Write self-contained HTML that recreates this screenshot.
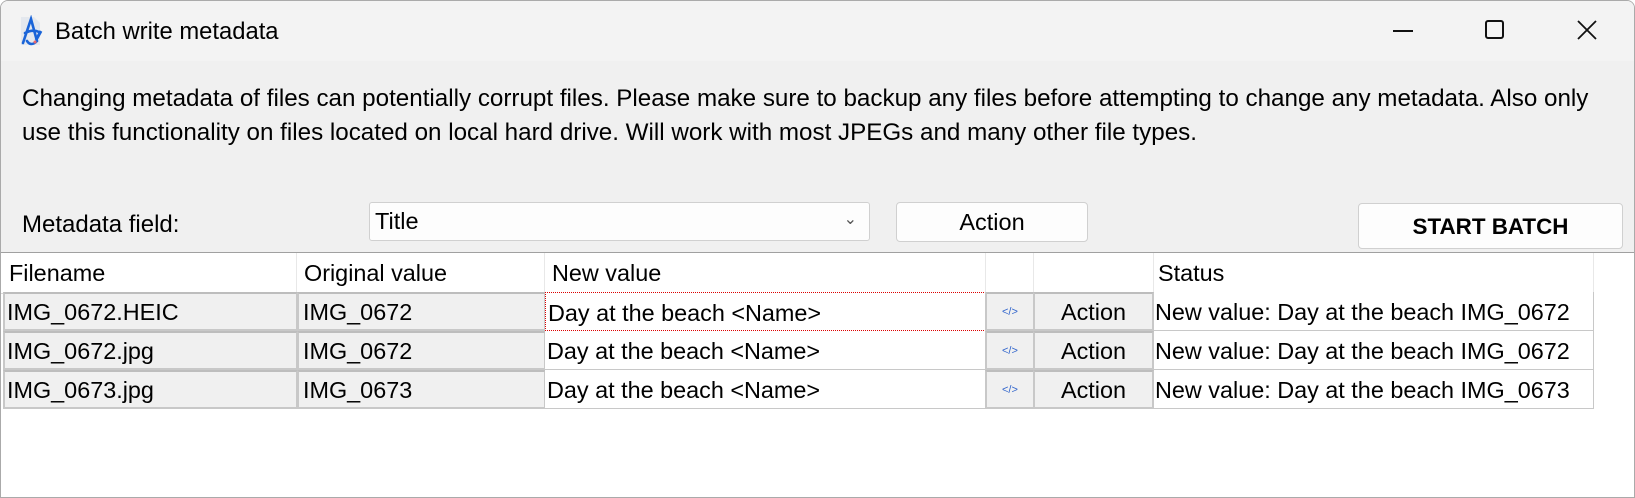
<!DOCTYPE html>
<html><head><meta charset="utf-8"><style>
*{box-sizing:border-box;margin:0;padding:0}
body{width:1635px;height:498px;overflow:hidden;background:#fff;font-family:"Liberation Sans",sans-serif;color:#000;position:relative}
.win{position:absolute;left:0;top:0;width:1635px;height:498px;background:#f0f0f0;border:1px solid #aaa;border-radius:8px 8px 0 0;overflow:hidden}
.tb{position:absolute;left:0;top:0;width:100%;height:60px;background:#f3f3f3}
.t{position:absolute;font-size:24px;white-space:nowrap}
.btn{position:absolute;background:#fdfdfd;border:1px solid #d0d0d0;border-radius:4px;font-size:23.5px;text-align:center}
.grid{position:absolute;left:0;top:251px;width:1633px;height:247px;background:#fff;border-top:1px solid #a0a0a0}
.c{position:absolute;font-size:23.4px;white-space:nowrap;overflow:hidden;padding-left:4px;line-height:37px}
.g{background:#f0f0f0;border:2px solid #c8c8c8;border-top-color:#bdbdbd}
.w{background:#fff;border-bottom:1px solid #c8c8c8;padding-top:2px}
</style></head><body>
<div class="win">
<div class="tb"></div>
<svg style="position:absolute;left:14px;top:14px" width="32" height="32" viewBox="0 0 32 32">
<path d="M6 2h13l6 6v22H6z" fill="#e4e8ee"/>
<path d="M8 28 L16 4 L22 26 M10 18 Q18 14 24 17 M22 26 Q16 32 12 26" fill="none" stroke="#1a64d8" stroke-width="2.6" stroke-linecap="round"/>
<path d="M26 16 l-5 9" stroke="#1a64d8" stroke-width="3"/><circle cx="20" cy="27" r="1.5" fill="#e66"/>
</svg>
<div class="t" style="left:54px;top:17px;font-size:23.8px">Batch write metadata</div>
<div style="position:absolute;left:1392px;top:29px;width:20px;height:2px;background:#111"></div>
<div style="position:absolute;left:1484px;top:19px;width:19px;height:19px;border:2px solid #111;border-radius:3px"></div>
<svg style="position:absolute;left:1576px;top:19px" width="20" height="20"><path d="M1 1L19 19M19 1L1 19" stroke="#111" stroke-width="1.8"/></svg>
<div class="t" style="left:21px;top:81px;line-height:34px;font-size:24.2px">Changing metadata of files can potentially corrupt files. Please make sure to backup any files before attempting to change any metadata. Also only<br>use this functionality on files located on local hard drive. Will work with most JPEGs and many other file types.</div>
<div class="t" style="left:21px;top:210px">Metadata field:</div>
<div class="btn" style="left:368px;top:201px;width:501px;height:39px;text-align:left;padding-left:5px;line-height:37px;border-radius:3px">Title<span style="position:absolute;right:12px;top:-2px;font-size:16px;color:#555">&#8964;</span></div>
<div class="btn" style="left:895px;top:201px;width:192px;height:40px;line-height:38px">Action</div>
<div class="btn" style="left:1357px;top:202px;width:265px;height:46px;line-height:46px;font-weight:bold;font-size:22.4px">START BATCH</div>
<div class="grid">
<div class="c" style="left:0;top:0;width:296px;height:40px;line-height:40px;padding-left:8px;border-right:1px solid #e8e8e8">Filename</div>
<div class="c" style="left:296px;top:0;width:248px;height:40px;line-height:40px;padding-left:7px;border-right:1px solid #e8e8e8">Original value</div>
<div class="c" style="left:544px;top:0;width:441px;height:40px;line-height:40px;padding-left:7px;border-right:1px solid #e8e8e8">New value</div>
<div class="c" style="left:985px;top:0;width:48px;height:40px;border-right:1px solid #e8e8e8"></div>
<div class="c" style="left:1033px;top:0;width:120px;height:40px;border-right:1px solid #e8e8e8"></div>
<div class="c" style="left:1153px;top:0;width:440px;height:40px;line-height:40px;padding-left:4px;border-right:1px solid #e8e8e8">Status</div>
<div style="position:absolute;left:0;top:40px;width:1593px;border-top:1px solid #d8d8d8"></div>
</div>
<div style="position:absolute;left:0;top:291px">
<div class="c g" style="left:2px;top:0;width:295px;height:39px;padding-left:2px">IMG_0672.HEIC</div>
<div class="c g" style="left:296px;top:0;width:249px;height:39px">IMG_0672</div>
<div class="c w" style="left:544px;top:0;width:441px;height:39px;border:1px dotted #d00;line-height:37px;padding-left:2px">Day at the beach &lt;Name&gt;</div>
<div class="c g" style="left:984px;top:0;width:50px;height:39px"><span style="color:#3366cc;font-size:11px;position:absolute;left:15px;top:0">&lt;/&gt;</span></div>
<div class="c g" style="left:1032px;top:0;width:121px;height:39px;text-align:center;padding:0">Action</div>
<div class="c w" style="left:1153px;top:0;width:440px;height:39px;border-right:1px solid #c8c8c8;padding-left:1px">New value: Day at the beach IMG_0672</div>

<div class="c g" style="left:2px;top:39px;width:295px;height:39px;padding-left:2px">IMG_0672.jpg</div>
<div class="c g" style="left:296px;top:39px;width:249px;height:39px">IMG_0672</div>
<div class="c w" style="left:544px;top:39px;width:441px;height:39px;padding-left:2px">Day at the beach &lt;Name&gt;</div>
<div class="c g" style="left:984px;top:39px;width:50px;height:39px"><span style="color:#3366cc;font-size:11px;position:absolute;left:15px;top:0">&lt;/&gt;</span></div>
<div class="c g" style="left:1032px;top:39px;width:121px;height:39px;text-align:center;padding:0">Action</div>
<div class="c w" style="left:1153px;top:39px;width:440px;height:39px;border-right:1px solid #c8c8c8;padding-left:1px">New value: Day at the beach IMG_0672</div>

<div class="c g" style="left:2px;top:78px;width:295px;height:39px;padding-left:2px">IMG_0673.jpg</div>
<div class="c g" style="left:296px;top:78px;width:249px;height:39px">IMG_0673</div>
<div class="c w" style="left:544px;top:78px;width:441px;height:39px;padding-left:2px">Day at the beach &lt;Name&gt;</div>
<div class="c g" style="left:984px;top:78px;width:50px;height:39px"><span style="color:#3366cc;font-size:11px;position:absolute;left:15px;top:0">&lt;/&gt;</span></div>
<div class="c g" style="left:1032px;top:78px;width:121px;height:39px;text-align:center;padding:0">Action</div>
<div class="c w" style="left:1153px;top:78px;width:440px;height:39px;border-right:1px solid #c8c8c8;padding-left:1px">New value: Day at the beach IMG_0673</div>
</div>
</div>
</body></html>
